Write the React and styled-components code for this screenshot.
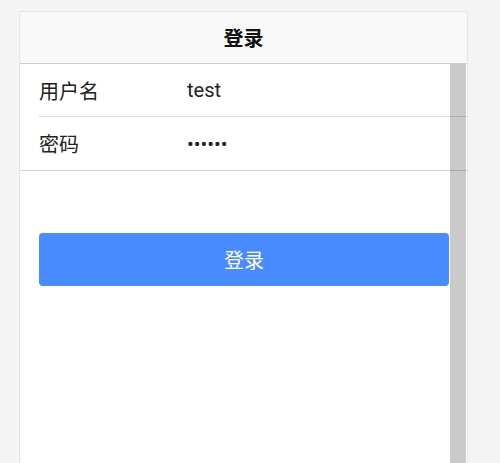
import React from "react";
import styled, { createGlobalStyle } from "styled-components";

const GlobalStyle = createGlobalStyle`
  html, body {
    margin: 0;
    padding: 0;
    background: #f4f4f4;
    font-family: Roboto, "Noto Sans CJK SC", sans-serif;
  }
  * {
    box-sizing: border-box;
  }
`;

const Page = styled.div`
  min-height: 100vh;
  padding: 11px 0 0 19px;
  display: flex;
`;

const Panel = styled.div`
  width: 449px;
  display: flex;
  flex-direction: column;
  background: #fff;
  border: 1px solid #e6e6e6;
  border-bottom: none;
`;

const Header = styled.div`
  height: 52px;
  display: flex;
  align-items: center;
  justify-content: center;
  background: #f8f8f8;
  border-bottom: 1px solid #cccccc;
`;

const Title = styled.h1`
  margin: 0;
  font-size: 20px;
  font-weight: 700;
  color: #111;
`;

const Body = styled.div`
  flex: 1;
  position: relative;
`;

const ScrollTrack = styled.div`
  position: absolute;
  top: 0;
  bottom: 0;
  right: 1px;
  width: 16px;
  background: #cacaca;
`;

const List = styled.div`
  position: relative;
  border-bottom: 1px solid rgba(0, 0, 0, 0.17);
`;

const Row = styled.label`
  display: flex;
  align-items: center;
  height: 53px;
  margin-left: 19px;
  border-bottom: ${(p) => (p.$last ? "none" : "1px solid rgba(0, 0, 0, 0.13)")};
`;

const Label = styled.span`
  width: 148px;
  font-size: 20px;
  color: #222;
  font-family: "Noto Sans CJK SC", sans-serif;
`;

const Field = styled.input`
  flex: 1;
  border: none;
  outline: none;
  background: transparent;
  padding: 0;
  font-family: Roboto, sans-serif;
  font-size: 20px;
  color: #222;
`;

const Actions = styled.div`
  position: relative;
  padding: 62px 18px 0 19px;
`;

const LoginButton = styled.button`
  width: 410px;
  height: 53px;
  border: none;
  border-radius: 4px;
  background: #488aff;
  color: #fff;
  font-size: 20px;
  font-family: "Noto Sans CJK SC", sans-serif;
  cursor: pointer;
`;

export default function App() {
  return (
    <>
      <GlobalStyle />
      <Page>
        <Panel>
          <Header>
            <Title>登录</Title>
          </Header>
          <Body>
            <ScrollTrack />
            <List>
              <Row>
                <Label>用户名</Label>
                <Field type="text" defaultValue="test" />
              </Row>
              <Row $last>
                <Label>密码</Label>
                <Field type="password" defaultValue="123456" />
              </Row>
            </List>
            <Actions>
              <LoginButton>登录</LoginButton>
            </Actions>
          </Body>
        </Panel>
      </Page>
    </>
  );
}
